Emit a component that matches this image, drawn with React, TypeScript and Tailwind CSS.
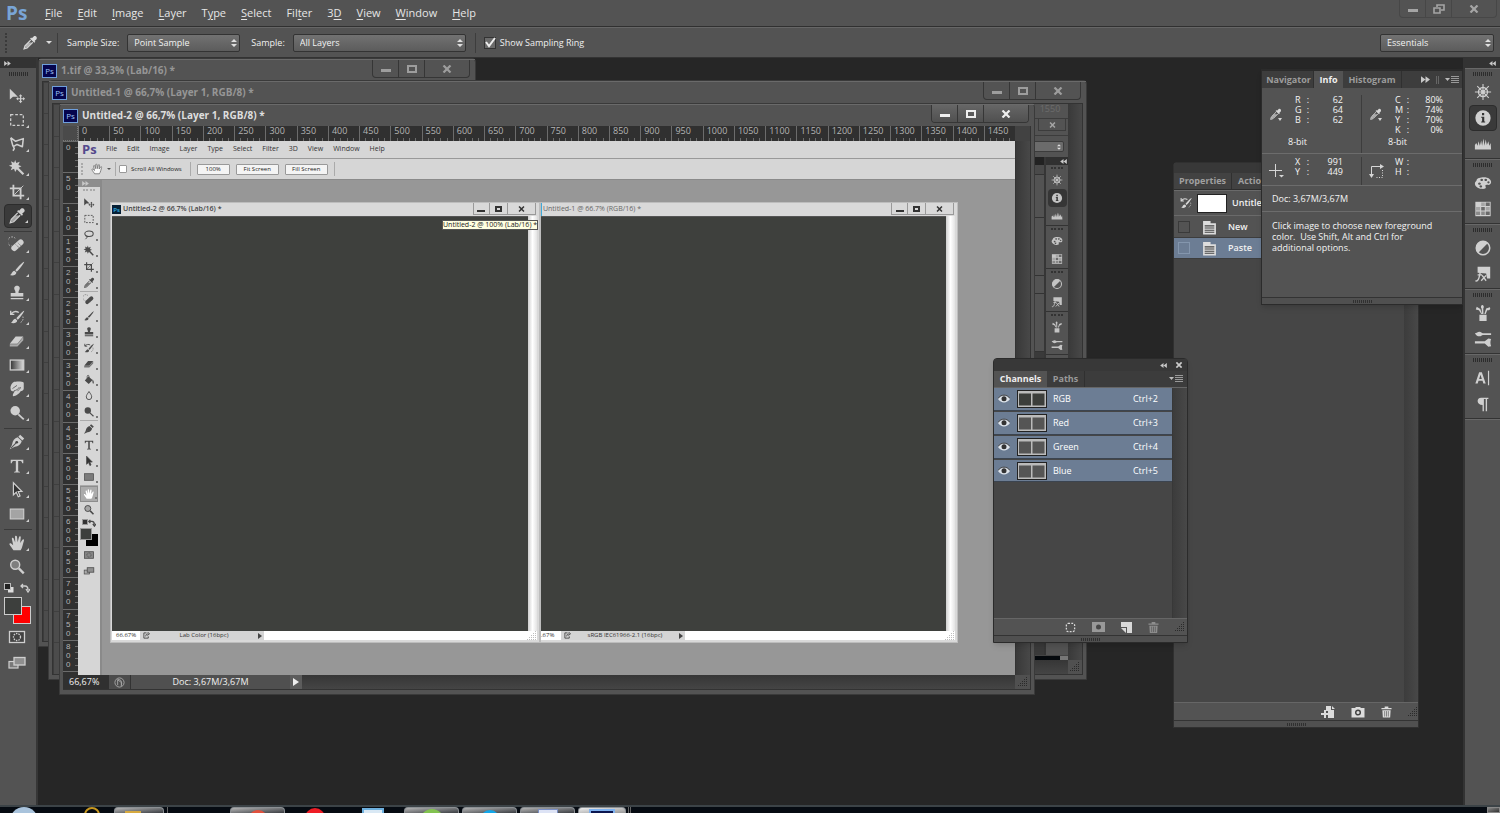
import type { ReactNode } from "react";
import clsx from "clsx";

const tools: Record<string, ReactNode> = {
  move: (
    <>
      <path d="M2 2v12l3.500-3.300H11z" />
      <path d="M14 8l2 2.400h-1.300v2h2V11L19 13l-2.300 2v-1.400h-2v2H16L14 18l-2-2.400h1.300v-2h-2V15L9 13l2.300-2v1.400h2v-2H12z" />
    </>
  ),
  marquee: <rect x="3" y="4" width="14" height="12" fill="none" stroke="currentColor" strokeWidth="1.400" strokeDasharray="3 2" />,
  polyLasso: (
    <path d="M3 3l5.500 4L17 4l-1 9-6-2.500-4 2.500 1 2-1.500 2.500M3 3l2.500 9.500" fill="none" stroke="currentColor" strokeWidth="1.700" strokeLinejoin="round" />
  ),
  lasso: (
    <>
      <ellipse cx="10" cy="8" rx="7" ry="4.500" fill="none" stroke="currentColor" strokeWidth="1.700" />
      <path d="M5 11c-1.500 1.500 2.500 1.500 1.500 3.500L4 17" fill="none" stroke="currentColor" strokeWidth="1.500" />
    </>
  ),
  wand: (
    <path d="M8 1l1.200 3.500L13 3l-1.500 3.600L15 8l-3.300 1.600 6.300 6.600-1.700 1.600-6.500-6.500L8 14.500l-1.300-3.700L3 12.500l1.500-3.600L1 7.500 4.600 6 3.200 2.500l3.600 1.800z" />
  ),
  crop: (
    <>
      <path d="M6 2v12h12M2 6h12v12" fill="none" stroke="currentColor" strokeWidth="2" />
      <path d="M7 13L17 3" stroke="currentColor" />
    </>
  ),
  eyedropper: (
    <>
      <path d="M12.300 4.200l2.300-2.400c2-1.700 5.100 1.200 3.500 3.400l-2.400 2.300 1 1-1.300 1.300-5.300-5.200 1.300-1.400z" />
      <path d="M10.800 6.500L3.700 13.600 2.500 17.500l3.900-1.200 7.100-7.100" fill="none" stroke="currentColor" strokeWidth="1.400" />
      <path d="M8 9.500h4.500l-6 6-3 .800.900-2.800z" opacity="0.700" />
    </>
  ),
  heal: (
    <>
      <path d="M8 2.500a5 5 0 1 0-4 8.500" fill="none" stroke="currentColor" strokeDasharray="1.500 1.500" />
      <rect x="2.500" y="7" width="16" height="6.500" rx="3.200" transform="rotate(-42 10.500 10.250)" />
      <path d="M8.500 9.500l4.500 4M11 7.500l4 4" stroke="#555" strokeWidth="0.900" strokeDasharray="1 1" />
    </>
  ),
  brush: (
    <path d="M18 2c.6.500-6.800 10.500-8.200 11l-1.700-1.600C9.500 9.500 17 1.500 18 2zM7.300 12l2 2c0 3-4.300 4-7.300 2.800C4.500 16 4 12.500 7.300 12z" />
  ),
  stamp: <path d="M10 2c3.200 0 3.600 2.800 2.500 4.600-.7 1.200-.9 2-.7 3.400H17v4H3v-4h5.200c.2-1.400 0-2.200-.7-3.400C6.400 4.800 6.800 2 10 2zM3 15.500h14V17H3z" />,
  historyBrush: (
    <>
      <path d="M3 3v4h4M3.500 6.500C6 3.500 9.500 3.500 12 5" fill="none" stroke="currentColor" strokeWidth="1.500" />
      <path d="M18 3c.6.500-5.800 9.500-7.200 10l-1.500-1.500C10.600 9.500 17 2.500 18 3zM8.300 12l1.900 2c0 3-4.200 3.700-7.200 2.500 2.500-.800 2-4 5.300-4.500z" />
      <path d="M16.500 9.500c1 3-.5 6-3.500 7" fill="none" stroke="currentColor" strokeDasharray="1.500 1.500" />
    </>
  ),
  eraser: (
    <>
      <path d="M8.500 5H17l-6.500 8H2z" />
      <path d="M2 13.500h8.500L17 5.500v3.700L10.500 16H2z" opacity="0.700" />
    </>
  ),
  gradient: (
    <>
      <defs>
        <linearGradient id="ramp">
          <stop offset="0" stopColor="#333" />
          <stop offset="1" stopColor="#ddd" />
        </linearGradient>
      </defs>
      <rect x="2.500" y="4.500" width="15" height="11" fill="url(#ramp)" stroke="currentColor" strokeWidth="1.400" />
    </>
  ),
  bucket: (
    <>
      <path d="M9 4l7 6-6.500 6.500L3 11z" />
      <path d="M7 8V4c0-2.500 3-2.500 3 0v4" fill="none" stroke="currentColor" strokeWidth="1.300" />
      <path d="M16 9c2 2 2.500 6 1.500 7s-2.500-3-1.500-7z" />
    </>
  ),
  smudge: (
    <>
      <path d="M6 2.500C9 1.500 16 1.500 17.500 3v6.500c0 2-2 3-3.500 3-1 2.500-5.500 5.500-8 5.500-1.500-.500 0-3.500 1.500-5.500-2.500.500-5-.500-4.500-2.500C2 8 4 3.500 6 2.500z" />
      <path d="M5 9.500l5-3.500M6.500 12c3-.5 5-2 6-4M10.500 12c2-1 3-2.500 3.500-4" fill="none" stroke="#555" strokeWidth="0.900" />
    </>
  ),
  blur: <path d="M10 2.500c2.500 4 4.500 6 4.500 9a4.500 4.500 0 0 1-9 0c0-3 2-5 4.500-9z" fill="none" stroke="currentColor" strokeWidth="1.500" />,
  dodge: (
    <>
      <circle cx="8" cy="7.500" r="5.300" />
      <path d="M11.500 11.500l6 5.500" stroke="currentColor" strokeWidth="2" />
    </>
  ),
  pen: (
    <>
      <path d="M13.500 2l4.500 4-2 2.200-4.500-4zM10.700 4.800l4.500 4.200c-.7 4-4 6-7.700 6.300L2 18c.5-1.700 2-3.300 2.600-5.500.6-3.500 2.600-6.900 6.100-7.700z" />
      <path d="M3 17l6-6" stroke="#555" strokeWidth="1.200" />
      <circle cx="9.700" cy="10.300" r="1.500" fill="#444" />
    </>
  ),
  type: <path d="M3 3h14v4h-1.200c-.3-1.800-1-2.500-2.600-2.500h-1.900v10.600c0 1 .5 1.300 2 1.400v.800H6.700v-.800c1.500-.100 2-.400 2-1.400V4.500H6.800C5.200 4.500 4.500 5.200 4.200 7H3z" />,
  pathSelect: <path d="M6 2v13.500l3.200-3 2.200 5 2-.900-2.100-4.900H15.500z" fill="#333" stroke="currentColor" strokeWidth="1.300" />,
  shape: <rect x="2.500" y="4.500" width="15" height="11" fill="currentColor" fillOpacity="0.650" stroke="currentColor" strokeWidth="1.200" />,
  hand: <path d="M6 18c-1-2-4.500-6-4.500-7s1.500-1 2.300-.3l2 1.800L4.300 5.500c-.3-1.500 1.500-1.800 2-.500L8 9.500 7.800 3c0-1.500 2-1.500 2.200 0l.7 6.200L12.200 3.500c.4-1.400 2.200-1 2 .5l-.7 6L16 6.500c.8-1.200 2.200-.4 1.700.9-1 2.800-1.700 8-3.700 10.600z" />,
  zoom: (
    <>
      <circle cx="8" cy="7.500" r="5" fill="currentColor" fillOpacity="0.350" stroke="currentColor" strokeWidth="1.600" />
      <path d="M12 11.500l5.500 5.500" stroke="currentColor" strokeWidth="2.600" />
    </>
  ),
  quickMask: (
    <>
      <rect x="2.500" y="4.500" width="15" height="11" fill="#333" fillOpacity="0.500" stroke="currentColor" strokeWidth="1.300" />
      <circle cx="10" cy="10" r="3.500" fill="none" stroke="currentColor" strokeWidth="1.300" strokeDasharray="1.500 1" />
    </>
  ),
  screenMode: (
    <>
      <rect x="2" y="8.500" width="9" height="6.500" fill="currentColor" fillOpacity="0.300" stroke="currentColor" strokeWidth="1.200" />
      <rect x="7" y="4.500" width="11" height="7.500" fill="#8f8f8f" stroke="currentColor" strokeWidth="1.300" />
    </>
  ),
  navigator: (
    <g fill="none" stroke="currentColor">
      <circle cx="10" cy="10" r="5" strokeWidth="1.500" />
      <circle cx="10" cy="10" r="1.500" strokeWidth="1.200" />
      <path d="M10 1v18M1 10h18M3.600 3.600l12.800 12.800M16.400 3.600L3.600 16.400" strokeWidth="1.200" />
    </g>
  ),
  info: (
    <>
      <circle cx="10" cy="10" r="8.500" />
      <path d="M8 8.500h3.400v5.300h1V15H8v-1.200h1V9.700H8zM8.900 4.500h2.400V7H8.900z" fill="#333" />
    </>
  ),
  histogram: <path d="M1 16v-5l1.500-2L4 12l1-5 1.500 5L8 6l1 6 1.500-8 1.200 8L13 5l1.300 6L16 7l1 5 1.500-3 .5 7z" />,
  color: (
    <path
      fillRule="evenodd"
      d="M11 3.500c5 0 8 2.500 8 5.500 0 2.500-2 3.500-4 3-2-.400-3 .600-2 2.200 1 2-2 2.600-4.500 2.300C4 16 1 13.500 1 10.500 1 8.500 3 8 3 6.500 3.500 4.500 7 3.500 11 3.500zM6 9.500a1.500 1.200 0 1 0 .1 0zM8.500 5.300a1.500 1.200 0 1 0 .1 0zM13 5.300a1.500 1.200 0 1 0 .1 0zM16 8a1.300 1.100 0 1 0 .1 0zM7.500 12.500a1.500 1.200 0 1 0 .1 0z"
    />
  ),
  swatches: (
    <>
      <rect x="1.500" y="2" width="17" height="16" />
      <path d="M8 2.800h4v4H8zM2.300 7.800h4.500v4H2.300zM13 7.800h4.500v4H13z" fill="#a5a5a5" />
      <path d="M13 2.800h4.500v4H13zM8 7.800h4v4H8zM13 12.800h4.500v4H13z" fill="#6a6a6a" />
      <path d="M2.300 12.800h4.500v4H2.300zM8 12.800h4v4H8z" fill="#8a8a8a" />
    </>
  ),
  adjustments: (
    <>
      <circle cx="10" cy="10" r="7.500" fill="none" stroke="currentColor" strokeWidth="1.700" />
      <path d="M15.500 4.500a7.700 7.700 0 0 0-11 11z" />
    </>
  ),
  styles: (
    <>
      <path d="M4 2h14v13h-3.500l-1-5.500L4 8.500z" />
      <path d="M9.500 7.500C7 6.500 6.700 9 6.200 11.500S4.500 19 1.500 17.500M4 11h5M9 11.500l4.500 6M13.500 11.500l-5.500 6" fill="none" stroke="currentColor" strokeWidth="1.500" />
    </>
  ),
  brushPanel: (
    <path d="M6 12h8v7H6zM9 11L8.500 5C7 3 8 1 9.500 1c2 1 1.500 3 .8 4L10.500 11zM8 11L5.500 7 2 6l1-3 4 2.500L9 11zM11.500 11l2-6 4-1.500c1.500 2-.5 4-2.800 3.500L13 11z" />
  ),
  brushPresets: (
    <>
      <path d="M1 3.500c2 0 3-1.500 5-1.500 2 0 2.500 1.500 4 1.500h9v2h-9c-1.500 0-2 1.500-4 1.500S2.500 6 1 3.500z" />
      <path d="M1 12.500h11l4-3 3 .500c-1 2.500-1 5 0 8l-3 .500-4-3.500H1z" />
    </>
  ),
  character: (
    <path d="M5.700 3.500h3L13 16h-2.600l-.9-3H5l-.9 3H1.500zM7.200 6.500L5.700 11h3zM15.500 2h1.300v16h-1.300z" fillRule="evenodd" />
  ),
  paragraph: <path d="M8 3h8v1.500h-1.500V18H13V4.500h-2V18H9.500v-7C2.500 11 2.500 3 8 3z" />,
};

const Icon = ({ name, className }: { name: string; className: string }) => (
  <svg viewBox="0 0 20 20" className={clsx("shrink-0", className)} fill="currentColor" aria-hidden="true">
    {tools[name]}
  </svg>
);

const toolGroups = [
  ["move", "marquee", "polyLasso", "wand", "crop", "eyedropper"],
  ["heal", "brush", "stamp", "historyBrush", "eraser", "gradient", "smudge", "dodge"],
  ["pen", "type", "pathSelect", "shape"],
  ["hand", "zoom"],
];

const innerToolGroups = [
  ["move", "marquee", "lasso", "wand", "crop", "eyedropper"],
  ["heal", "brush", "stamp", "historyBrush", "eraser", "bucket", "blur", "dodge"],
  ["pen", "type", "pathSelect", "shape"],
  ["hand", "zoom"],
];

const dockGroups = [
  ["navigator", "info", "histogram"],
  ["color", "swatches"],
  ["adjustments", "styles"],
  ["brushPanel", "brushPresets"],
  ["character", "paragraph"],
];

const menuItems = [
  ["", "F", "ile"],
  ["", "E", "dit"],
  ["", "I", "mage"],
  ["", "L", "ayer"],
  ["T", "y", "pe"],
  ["", "S", "elect"],
  ["Fil", "t", "er"],
  ["3", "D", ""],
  ["", "V", "iew"],
  ["", "W", "indow"],
  ["", "H", "elp"],
];

const channels = [
  { name: "RGB", keys: "Ctrl+2", shade: "#3c3e3b" },
  { name: "Red", keys: "Ctrl+3", shade: "#555" },
  { name: "Green", keys: "Ctrl+4", shade: "#555" },
  { name: "Blue", keys: "Ctrl+5", shade: "#555" },
];

const Grip = ({ className }: { className?: string }) => (
  <svg viewBox="0 0 19 4" preserveAspectRatio="none" className={clsx("h-1 w-[19px] shrink-0", className)} aria-hidden="true">
    <path d="M.5 0v4M2.500 0v4M4.500 0v4M6.500 0v4M8.500 0v4M10.500 0v4M12.500 0v4M14.500 0v4M16.500 0v4M18.500 0v4" stroke="#2c2c2c" />
  </svg>
);

const ResizeCorner = ({ className }: { className?: string }) => (
  <svg viewBox="0 0 10 10" className={clsx("size-[10px] shrink-0", className)} aria-hidden="true">
    <path d="M8.500 0v10M6.500 2v8M4.500 4v6M2.500 6v4M.5 8v2" stroke="#2a2a2a" strokeDasharray="1 1" />
  </svg>
);

const DoubleArrow = ({ flip, className }: { flip?: boolean; className?: string }) => (
  <svg viewBox="0 0 8 6" className={clsx("h-[5px] w-[7px] fill-[#c8c8c8]", flip && "rotate-180", className)} aria-hidden="true">
    <path d="M0 0l4 3-4 3zM4 0l4 3-4 3z" />
  </svg>
);

const PanelMenuIcon = () => (
  <svg viewBox="0 0 14 8" className="h-2 w-[14px]" aria-hidden="true">
    <path d="M0 2h5L2.500 5z" fill="#bbb" />
    <path d="M6 .5h8M6 2.500h8M6 4.500h8M6 6.500h8" stroke="#999" />
  </svg>
);

const CloseGlyph = ({ className }: { className: string }) => (
  <svg viewBox="0 0 10 8" className={className} fill="none" stroke="currentColor" strokeWidth="2.200" aria-hidden="true">
    <path d="M1.500.5l7 7M8.500.5l-7 7" />
  </svg>
);

const Trash = ({ className }: { className: string }) => (
  <svg viewBox="0 0 12 12" className={className} fill="currentColor" aria-hidden="true">
    <path d="M4 0h4v1.500h3.500V3H.5V1.500H4zM1.500 4h9L10 12H2z" />
    <path d="M4 5v6M6 5v6M8 5v6" stroke="#505050" strokeWidth="0.700" />
  </svg>
);

const PsBadge = () => (
  <span className="flex h-[14px] w-[15px] shrink-0 items-center justify-center border border-[#6f9fdc] bg-[#05054e] text-[8px] leading-none text-[#9cc4f5]">
    Ps
  </span>
);

const CaptionButtons = ({ tone }: { tone: "idle" | "active" }) => {
  const cell = clsx(
    "flex items-center justify-center border-[#363636]",
    tone === "active" ? "bg-linear-to-b from-[#666] to-[#505050] text-[#eee]" : "text-[#9d9d9d]"
  );
  return (
    <div className="flex h-[18px] self-start overflow-hidden rounded-b-sm border border-t-0 border-[#363636]">
      <button type="button" aria-label="Minimize" className={clsx(cell, "w-[26px] border-r")}>
        <span className="mt-1 h-[3px] w-[10px] bg-current" />
      </button>
      <button type="button" aria-label="Maximize" className={clsx(cell, "w-[26px] border-r")}>
        <span className="h-2 w-[10px] border-2 border-current" />
      </button>
      <button type="button" aria-label="Close" className={clsx(cell, "w-[44px]")}>
        <CloseGlyph className="h-2 w-[10px]" />
      </button>
    </div>
  );
};

const TitleBar = ({ title, tone }: { title: string; tone: "idle" | "active" }) => (
  <div className="flex h-[22px] shrink-0 items-center gap-1 border-t border-[#6a6a6a] pr-[5px] pl-[3px]">
    <PsBadge />
    <span className={clsx("flex-1 truncate text-[10px] font-bold", tone === "active" ? "text-[#dedede]" : "text-[#969696]")}>
      {title}
    </span>
    <CaptionButtons tone={tone} />
  </div>
);

const StepperArrows = () => (
  <svg viewBox="0 0 6 8" className="pointer-events-none absolute top-1/2 right-[3px] h-2 w-[6px] -translate-y-1/2 fill-[#e0e0e0]" aria-hidden="true">
    <path d="M0 3l3-3 3 3zM0 5l3 3 3-3z" />
  </svg>
);

const Dropdown = ({ id, value, className }: { id: string; value: string; className: string }) => (
  <span className={clsx("relative block", className)}>
    <select
      id={id}
      defaultValue={value}
      aria-label={value}
      className="block h-[18px] w-full appearance-none rounded-[2px] border border-[#333] bg-linear-to-b from-[#727272] to-[#5c5c5c] pl-[6px] text-[9px] leading-4 text-[#f2f2f2]"
    >
      <option>{value}</option>
    </select>
    <StepperArrows />
  </span>
);

const MenuBar = () => (
  <header className="flex h-[27px] shrink-0 items-center border-b border-[#303030] bg-[#535353]">
    <span className="w-[45px] pl-[6px] text-[19px] leading-none font-bold text-[#79a5d6]">Ps</span>
    <nav className="flex gap-[15px]">
      {menuItems.map(([before, key, after]) => (
        <button type="button" key={before + key + after} className="text-[11px] text-[#e6e6e6]">
          {before}
          <span className="underline underline-offset-2">{key}</span>
          {after}
        </button>
      ))}
    </nav>
    <div className="mr-[3px] ml-auto flex h-[18px] self-start rounded-b-sm border border-t-0 border-[#474747] text-[#a5a5a5]">
      <button type="button" aria-label="Minimize" className="flex w-[26px] items-center justify-center border-r border-[#474747]">
        <span className="mt-1 h-[3px] w-[10px] bg-current" />
      </button>
      <button type="button" aria-label="Restore" className="flex w-[26px] items-center justify-center border-r border-[#474747]">
        <svg viewBox="0 0 12 10" className="h-[10px] w-3" fill="none" stroke="currentColor" strokeWidth="1.600">
          <path d="M4 3V1h7v5H8M1 4h6v5H1z" />
        </svg>
      </button>
      <button type="button" aria-label="Close" className="flex w-[44px] items-center justify-center">
        <CloseGlyph className="h-2 w-[10px]" />
      </button>
    </div>
  </header>
);

const OptionsBar = () => (
  <div className="flex h-[31px] shrink-0 items-center border-t border-b border-t-[#666] border-b-[#333] bg-[#535353] text-[9px] text-[#f0f0f0]">
    <span className="ml-[5px] h-5 border-l-2 border-dotted border-[#3a3a3a]" />
    <button type="button" aria-label="Eyedropper tool" className="ml-[15px] flex items-center gap-2 text-[#dcdcdc]">
      <Icon name="eyedropper" className="size-4" />
      <span className="border-x-[3px] border-t-[3px] border-x-transparent border-t-current" />
    </button>
    <span className="mr-[9px] ml-[5px] h-5 border-l border-[#3d3d3d]" />
    <label htmlFor="sample-size">Sample Size:</label>
    <Dropdown id="sample-size" value="Point Sample" className="ml-2 w-[113px]" />
    <label htmlFor="sample" className="ml-[11px]">
      Sample:
    </label>
    <Dropdown id="sample" value="All Layers" className="ml-2 w-[173px]" />
    <span className="mr-2 ml-[9px] h-5 border-l border-[#3d3d3d]" />
    <label className="flex items-center gap-1">
      <span className="relative flex">
        <input type="checkbox" defaultChecked className="size-3 appearance-none border border-[#333] bg-[#6b6b6b]" />
        <svg viewBox="0 0 12 12" className="pointer-events-none absolute inset-0 size-3" fill="none" stroke="#eee" strokeWidth="2">
          <path d="M2 5l3 4 6-8" />
        </svg>
      </span>
      Show Sampling Ring
    </label>
    <Dropdown id="workspace" value="Essentials" className="mr-[6px] ml-auto w-[114px]" />
  </div>
);

const Toolbar = () => (
  <aside className="flex w-[38px] shrink-0 flex-col border-r-2 border-[#363636] bg-[#535353] text-[#cfcfcf]">
    <div className="flex h-[10px] shrink-0 items-center bg-[#333] pl-1">
      <DoubleArrow />
    </div>
    <Grip className="mx-auto mt-1 mb-[7px]" />
    {toolGroups.map((group) => (
      <div
        key={group[0]}
        className={clsx("mx-1 flex flex-col border-b pt-px pb-[3px]", group[0] === "hand" ? "border-transparent" : "border-[#3a3a3a]")}
      >
        {group.map((name) => (
          <button
            type="button"
            key={name}
            aria-label={name}
            className={clsx(
              "relative flex h-6 items-center justify-center rounded-sm pr-[2px]",
              name === "eyedropper" && "border border-[#2c2c2c] bg-[#3a3a3a]"
            )}
          >
            <Icon name={name} className="size-[18px]" />
            {name !== "move" && name !== "zoom" && (
              <span className="absolute right-[3px] bottom-1 border-b-[3px] border-l-[3px] border-b-current border-l-transparent" />
            )}
          </button>
        ))}
      </div>
    ))}
    <div className="flex items-center justify-between pr-[6px] pl-1">
      <svg viewBox="0 0 10 10" className="size-[10px]">
        <rect x="4" y="4" width="5.500" height="5.500" fill="#ddd" />
        <rect x=".5" y=".5" width="6" height="6" fill="#222" stroke="#bbb" />
      </svg>
      <svg viewBox="0 0 10 10" className="size-[10px]" fill="none" stroke="currentColor" strokeWidth="1.300">
        <path d="M1 3h4q3 0 3 4M3 1L1 3l2 2M6 6l2 3 2-3" />
      </svg>
    </div>
    <div className="mt-1 ml-1 grid h-[27px] w-[27px] grid-cols-3 grid-rows-3 self-start">
      <span className="z-10 col-start-1 col-end-3 row-start-1 row-end-3 border border-[#ccc] bg-[#3d3f3d]" />
      <span className="col-start-2 col-end-4 row-start-2 row-end-4 border border-[#ccc] bg-[#f00]" />
    </div>
    <div className="mx-auto mt-[2px] flex flex-col gap-1 pr-[2px]">
      <button type="button" aria-label="Quick mask" className="flex h-[22px] items-center">
        <Icon name="quickMask" className="size-5" />
      </button>
      <button type="button" aria-label="Screen mode" className="flex h-[22px] items-center">
        <Icon name="screenMode" className="size-5" />
      </button>
    </div>
  </aside>
);

const Dock = () => (
  <aside className="flex w-[37px] shrink-0 flex-col border-l-2 border-[#333] bg-[#535353] text-[#d0d0d0]">
    <div className="flex h-[10px] shrink-0 items-center justify-end bg-[#333] pr-1">
      <DoubleArrow flip />
    </div>
    {dockGroups.map((group) => (
      <div key={group[0]} className="flex flex-col items-center border-t border-b border-t-[#686868] border-b-[#333] pb-px">
        <Grip className="my-[3px]" />
        {group.map((name) => (
          <button
            type="button"
            key={name}
            aria-label={name}
            className={clsx(
              "flex h-[26px] w-7 items-center justify-center rounded-sm",
              name === "info" && "border border-[#2c2c2c] bg-[#3a3a3a]"
            )}
          >
            <Icon name={name} className="size-[18px]" />
          </button>
        ))}
      </div>
    ))}
    <div className="border-t border-[#686868]" />
  </aside>
);

const HorizontalRuler = () => (
  <div className="flex h-[15px] flex-1">
    {Array.from({ length: 30 }, (_, i) => (
      <div key={i} className="flex min-w-0 flex-1 basis-0 flex-col justify-between border-l border-[#6c6c6c]">
        <span className="pl-[3px] text-[9px] leading-[10px] text-[#b4b4b4]">{i * 50}</span>
        <span className="flex h-[3px] justify-evenly">
          {[0, 1, 2, 3].map((t) => (
            <span key={t} className="w-px bg-[#6c6c6c]" />
          ))}
        </span>
      </div>
    ))}
  </div>
);

const VerticalRuler = () => (
  <div className="flex w-[15px] shrink-0 flex-col bg-[#303030]">
    {Array.from({ length: 17 }, (_, i) => (
      <div key={i} className="flex min-h-0 flex-1 basis-0 justify-between border-t border-[#6c6c6c]">
        <span className="flex flex-col pt-px pl-[3px] font-['Liberation_Sans',sans-serif] text-[8px] leading-[9px] text-[#b4b4b4]">
          {String(i * 50)
            .split("")
            .map((digit, n) => (
              <span key={n}>{digit}</span>
            ))}
        </span>
        <span className="flex w-[3px] flex-col justify-evenly">
          {[0, 1, 2, 3].map((t) => (
            <span key={t} className="h-px bg-[#6c6c6c]" />
          ))}
        </span>
      </div>
    ))}
    <div className="h-1 border-t border-[#6c6c6c]" />
  </div>
);

const InnerToolbar = () => (
  <div className="flex w-[24px] shrink-0 flex-col border-r-2 border-[#8a8a8a] bg-[#d6d6d6] text-[#4a4a4a]">
    <div className="flex h-[7px] items-center bg-[#8e8e8e] pl-1">
      <DoubleArrow className="fill-[#555]" />
    </div>
    <span className="mx-auto mt-[2px] mb-1 w-3 border-t-2 border-dotted border-[#aaa]" />
    {innerToolGroups.map((group) => (
      <div key={group[0]} className={clsx("mx-[2px] flex flex-col border-b", group[0] === "hand" ? "border-transparent" : "border-[#aaa]")}>
        {group.map((name) => (
          <span
            key={name}
            className={clsx("relative flex h-4 items-center justify-center", name === "hand" && "border border-[#8d8d8d] bg-[#ababab] text-white")}
          >
            <Icon name={name} className="size-3" />
            {name !== "move" && name !== "zoom" && <span className="absolute right-0 bottom-[2px] size-[2px] bg-[#777]" />}
          </span>
        ))}
      </div>
    ))}
    <div className="flex justify-between px-1">
      <span className="size-[6px] border border-[#999] bg-[#333]" />
      <svg viewBox="0 0 10 10" className="size-2" fill="none" stroke="currentColor" strokeWidth="1.500">
        <path d="M1 3h4q3 0 3 4M3 1L1 3l2 2M6 6l2 3 2-3" />
      </svg>
    </div>
    <div className="mt-px ml-[2px] grid h-[18px] w-[18px] grid-cols-3 grid-rows-3">
      <span className="z-10 col-start-1 col-end-3 row-start-1 row-end-3 border border-[#999] bg-[#3d3f3d]" />
      <span className="col-start-2 col-end-4 row-start-2 row-end-4 bg-black" />
    </div>
    <span className="mt-[3px] flex flex-col items-center gap-1">
      <Icon name="quickMask" className="size-3" />
      <Icon name="screenMode" className="size-3" />
    </span>
  </div>
);

const InnerCaption = () => (
  <span className="flex h-3 self-start border border-t-0 border-[#999] text-[#333]">
    <span className="flex w-4 items-center justify-center border-r border-[#999]">
      <span className="mt-1 h-[2px] w-2 bg-current" />
    </span>
    <span className="flex w-[18px] items-center justify-center border-r border-[#999]">
      <span className="h-[6px] w-[7px] border-2 border-current" />
    </span>
    <span className="flex w-[27px] items-center justify-center">
      <CloseGlyph className="h-[6px] w-[7px]" />
    </span>
  </span>
);

interface InnerDocProps {
  title: string;
  zoom: string;
  profile: string;
  active?: boolean;
  className: string;
}

const InnerDoc = ({ title, zoom, profile, active, className }: InnerDocProps) => (
  <div className={clsx("flex min-w-0 basis-0 flex-col border border-[#bdbdbd] bg-[#d9d9d9]", className)}>
    <div className={clsx("flex h-[13px] items-center gap-[2px] pr-[3px] text-[7px]", active ? "pl-px font-semibold text-[#444]" : "border-l border-[#3fa9d8] pl-px text-[#666]")}>
      {active && (
        <span className="flex size-[9px] items-center justify-center bg-[#062036] text-[6px] leading-none text-[#35b5e8]">Ps</span>
      )}
      <span className="flex-1 truncate">{title}</span>
      <InnerCaption />
    </div>
    <div className={clsx("flex flex-1 pr-[2px]", active && "pl-px")}>
      <div className="flex-1 border-t border-[#555] bg-[#3e403d]" />
      <div className="w-[9px] bg-linear-to-r from-[#cfcfcf] via-white to-[#e3e3e3]" />
    </div>
    <div className={clsx("mr-[2px] mb-[2px] flex h-[9px] items-center bg-white text-[6px] leading-[9px] text-[#333]", active && "ml-px")}>
      <span className={clsx("shrink-0 overflow-hidden", active ? "w-7 pl-1" : "w-5")}>{zoom}</span>
      <span className="flex flex-none items-center bg-[#d4d4d4] pl-[3px]">
        <svg viewBox="0 0 8 8" className="size-[7px]" fill="none" stroke="#444">
          <path d="M4 1H1v6h5V5M3 5q0-3 3-3M5 0l2.500 2L5 4" />
        </svg>
        <span className="w-[108px] text-center">{profile}</span>
        <span className="mr-[2px] border-y-[3px] border-l-[4px] border-y-transparent border-l-[#444]" />
      </span>
      <ResizeCorner className="ml-auto size-2 opacity-30" />
    </div>
  </div>
);

const Artwork = () => (
  <div className="flex min-w-0 flex-1 flex-col bg-[#979797] text-[#555]">
    <div className="flex h-[18px] shrink-0 items-center border-b border-[#999] bg-[#d6d6d6]">
      <span className="w-7 pl-1 text-[13px] leading-none font-bold text-[#54498c]">Ps</span>
      <span className="flex gap-[10px] text-[7px] text-[#333]">
        {menuItems.map((parts) => (
          <span key={parts.join("")}>{parts.join("")}</span>
        ))}
      </span>
    </div>
    <div className="flex h-[21px] shrink-0 items-center border-b border-[#8a8a8a] bg-[#d6d6d6] text-[6px] text-[#222]">
      <span className="ml-[3px] h-3 border-l-2 border-dotted border-[#aaa]" />
      <svg viewBox="0 0 20 20" className="ml-2 size-3 fill-[#fafafa] stroke-[#777]" strokeWidth="1.500">
        {tools.hand}
      </svg>
      <span className="mx-1 border-x-2 border-t-2 border-x-transparent border-t-[#555]" />
      <span className="mr-[3px] h-[14px] border-l border-[#aaa]" />
      <label className="flex items-center gap-1">
        <input type="checkbox" className="size-2 appearance-none rounded-[1px] border border-[#999] bg-white" />
        Scroll All Windows
      </label>
      <span className="mr-[6px] ml-2 h-[14px] border-l border-[#aaa]" />
      <button type="button" className="mr-[6px] h-[11px] w-[33px] rounded-[1px] border border-[#999] bg-[#f4f4f4] leading-none">
        100%
      </button>
      <button type="button" className="mr-[6px] h-[11px] w-[43px] rounded-[1px] border border-[#999] bg-[#f4f4f4] leading-none">
        Fit Screen
      </button>
      <button type="button" className="h-[11px] w-[43px] rounded-[1px] border border-[#999] bg-[#f4f4f4] leading-none">
        Fill Screen
      </button>
      <span className="ml-[6px] h-[14px] border-l border-[#aaa]" />
    </div>
    <div className="flex min-h-0 flex-1">
      <InnerToolbar />
      <div className="relative flex flex-1 pt-[22px] pr-[57px] pb-8 pl-2">
        <InnerDoc title="Untitled-2 @ 66.7% (Lab/16) *" zoom="66.67%" profile="Lab Color (16bpc)" active className="grow-[430]" />
        <InnerDoc title="Untitled-1 @ 66.7% (RGB/16) *" zoom=".67%" profile="sRGB IEC61966-2.1 (16bpc)" className="grow-[418]" />
        <span className="absolute top-10 left-[340px] border border-[#555] bg-[#ffffe1] text-[7px] leading-2 whitespace-nowrap text-[#222]">
          Untitled-2 @ 100% (Lab/16) *
        </span>
      </div>
    </div>
  </div>
);

const FrontWindow = () => (
  <section className="absolute top-[45px] left-[21px] flex h-[592px] w-[976px] flex-col rounded-t-sm border border-[#3a3a3a] bg-[#535353]">
    <TitleBar title="Untitled-2 @ 66,7% (Layer 1, RGB/8) *" tone="active" />
    <div className="mx-[3px] mb-1 flex min-h-0 flex-1 flex-col border-r border-b border-[#333]">
      <div className="flex h-[15px] shrink-0 bg-[#303030]">
        <span className="w-[15px] border-r border-b border-dotted border-[#777] bg-[#4a4a4a]" />
        <HorizontalRuler />
        <span className="w-[15px] bg-[#424242]" />
      </div>
      <div className="flex min-h-0 flex-1">
        <VerticalRuler />
        <Artwork />
        <div className="w-[15px] shrink-0 border-l border-[#333] bg-linear-to-r from-[#393939] to-[#484848]" />
      </div>
      <div className="flex h-[14px] shrink-0 items-center bg-linear-to-b from-[#363636] to-[#454545] text-[9px] leading-[14px] text-[#f0f0f0]">
        <span className="w-[46px] bg-[#303030] pl-[6px]">66,67%</span>
        <span className="flex h-full w-[22px] items-center justify-center border-r border-[#333] bg-[#4b4b4b]">
          <svg viewBox="0 0 12 12" className="size-[11px]" fill="none" stroke="#a8a8a8">
            <circle cx="6" cy="6" r="5" />
            <path d="M4 9V3l4 3v4M4 3c4-1 5 3 4 6" />
          </svg>
        </span>
        <span className="h-full w-[159px] bg-[#505050] text-center">Doc: 3,67M/3,67M</span>
        <span className="flex h-full w-3 items-center justify-center bg-[#5c5c5c]">
          <span className="border-y-4 border-l-[6px] border-y-transparent border-l-[#eee]" />
        </span>
        <span className="ml-auto flex h-full w-[15px] items-center justify-center bg-[#505050]">
          <ResizeCorner />
        </span>
      </div>
    </div>
  </section>
);

const SliverDock = () => (
  <div className="flex w-6 flex-col border-l-2 border-[#363636] text-[#c4c4c4]">
    <div className="flex h-2 items-center justify-end bg-[#303030] pr-px">
      <DoubleArrow flip />
    </div>
    {dockGroups.slice(0, 4).map((group) => (
      <div key={group[0]} className="flex flex-col items-center border-b border-[#333]">
        <span className="my-[2px] w-3 border-t-2 border-dotted border-[#333]" />
        {group.map((name) => (
          <span key={name} className={clsx("flex h-[18px] w-[19px] items-center justify-center rounded-sm", name === "info" && "bg-[#363636]")}>
            <Icon name={name} className="size-3" />
          </span>
        ))}
      </div>
    ))}
  </div>
);

const SideTicks = ({ className }: { className: string }) => (
  <div className={clsx("flex shrink-0 flex-col border-l border-[#3c3c3c] bg-[#4c4c4c]", className)}>
    {Array.from({ length: 18 }, (_, i) => (
      <span key={i} className="flex-1 border-t border-[#3f3f3f]" />
    ))}
  </div>
);

const MiddleWindow = () => (
  <section className="absolute top-[22px] left-[10px] flex h-[600px] w-[1039px] flex-col rounded-t-sm border border-[#3a3a3a] bg-[#535353]">
    <TitleBar title="Untitled-1 @ 66,7% (Layer 1, RGB/8) *" tone="idle" />
    <div className="mx-[3px] mb-1 flex min-h-0 flex-1 border border-[#333]">
      <SideTicks className="w-[14px]" />
      <div className="flex-1 bg-[#262626]" />
      <div className="flex w-9 flex-col bg-[#535353]">
        <div className="flex h-[15px] flex-col items-center border-b border-[#3c3c3c] text-[9px] leading-[10px] text-[#6c6c6c]">1550</div>
        <div className="flex h-[17px] items-start justify-end border-b border-[#3c3c3c] pr-[2px]">
          <span className="flex h-3 w-7 items-center justify-center border border-t-0 border-[#3c3c3c] text-[#a5a5a5]">
            <CloseGlyph className="h-[6px] w-[7px]" />
          </span>
        </div>
        <div className="relative flex h-[21px] items-center pr-1">
          <span className="h-[11px] flex-1 rounded-[2px] border border-[#3c3c3c] bg-[#6b6b6b]" />
          <svg viewBox="0 0 6 8" className="absolute right-[7px] h-[6px] w-1 fill-[#e0e0e0]">
            <path d="M0 3l3-3 3 3zM0 5l3 3 3-3z" />
          </svg>
        </div>
        <div className="flex min-h-0 flex-1">
          <div className="flex flex-1 flex-col">
            <span className="h-2 bg-[#222]" />
            <span className="h-[10px] border-b border-[#333] bg-[#4a4a4a]" />
            <span className="h-[43px] border-b border-[#333]" />
            <span className="h-[58px] border-b border-[#333]" />
            <span className="h-[18px] border-b border-[#333]" />
            <span className="h-[58px] border-b border-[#333]" />
            <span className="flex-1 bg-[#3a3a3a]" />
          </div>
          <SliverDock />
        </div>
        <div className="flex h-[5px] justify-end border-t border-[#444] bg-[#05090d]">
          <span className="w-2 bg-[#777]" />
        </div>
        <div className="h-[14px] bg-linear-to-b from-[#363636] to-[#454545]" />
      </div>
      <div className="flex w-[14px] shrink-0 flex-col justify-end bg-linear-to-r from-[#393939] to-[#484848]">
        <span className="flex h-[14px] items-center justify-center bg-[#505050]">
          <ResizeCorner />
        </span>
      </div>
    </div>
  </section>
);

const BackWindow = () => (
  <section className="absolute top-0 left-0 flex h-[589px] w-[438px] flex-col rounded-t-sm border border-[#3a3a3a] bg-[#535353]">
    <TitleBar title="1.tif @ 33,3% (Lab/16) *" tone="idle" />
    <div className="mx-[3px] mb-1 flex min-h-0 flex-1 border border-[#333]">
      <SideTicks className="w-[14px]" />
      <div className="flex-1 bg-[#262626]" />
    </div>
  </section>
);

const PanelGrip = () => (
  <div className="flex h-[7px] shrink-0 items-center justify-center border-t border-[#333] bg-[#505050]">
    <Grip className="h-[3px]" />
  </div>
);

const ChannelsPanel = () => (
  <section className="absolute top-[300px] left-[955px] flex h-[285px] w-[195px] flex-col rounded-t-sm border border-[#2b2b2b] bg-[#535353] text-[9px] shadow-md">
    <div className="flex h-3 shrink-0 items-center justify-end gap-2 bg-[#383838] pr-1 text-[#ccc]">
      <DoubleArrow flip />
      <CloseGlyph className="h-[6px] w-2" />
    </div>
    <div className="flex h-[17px] shrink-0 items-center border-b border-[#666] bg-[#3c3c3c] pr-1 font-bold">
      <button type="button" className="h-full w-[53px] bg-[#535353] text-[#eee]">
        Channels
      </button>
      <button type="button" className="h-full w-[38px] border-r border-[#303030] text-[#999]">
        Paths
      </button>
      <span className="ml-auto">
        <PanelMenuIcon />
      </span>
    </div>
    <div className="flex min-h-0 flex-1">
      <ul className="flex-1 bg-[#464646] text-white">
        {channels.map(({ name, keys, shade }) => (
          <li key={name} className="flex h-[23px] items-center border-b border-[#3b4450] bg-[#6c7d94] pr-[14px] pl-1 not-last:mb-px last:h-[22px]">
            <svg viewBox="0 0 12 10" className="h-[10px] w-3" aria-hidden="true">
              <path d="M0 5c3-5 9-5 12 0-3 4.500-9 4.500-12 0z" fill="#dde3ea" />
              <circle cx="6" cy="4.800" r="2.500" fill="#333" />
              <path d="M0 4.500C3 0 9 0 12 4.500" fill="none" stroke="#444" />
            </svg>
            <svg viewBox="0 0 30 18" className="ml-[7px] h-[18px] w-[30px]" aria-hidden="true">
              <rect x=".5" y=".5" width="29" height="17" fill="#bbb" stroke="#222" />
              <path d="M2 3.500h12v12H2zM15.500 3.500h12v12h-12z" fill={shade} />
            </svg>
            <span className="ml-[6px]">{name}</span>
            <span className="ml-auto">{keys}</span>
          </li>
        ))}
      </ul>
      <div className="w-[15px] border-l border-[#383838] bg-linear-to-r from-[#3c3c3c] to-[#484848]" />
    </div>
    <div className="flex h-[17px] shrink-0 items-center justify-end gap-4 border-t border-[#666] pr-[2px] text-[#d8d8d8]">
      <button type="button" aria-label="Load selection">
        <svg viewBox="0 0 12 12" className="size-[11px]" fill="none" stroke="currentColor" strokeWidth="1.400" strokeDasharray="2 1.400">
          <rect x="1.500" y="1.500" width="9" height="9" rx="2" />
        </svg>
      </button>
      <button type="button" aria-label="Save selection" className="text-[#999]">
        <svg viewBox="0 0 13 10" className="h-[10px] w-[13px]">
          <path d="M0 0h13v10H0z" fill="currentColor" />
          <circle cx="6.500" cy="5" r="2.500" fill="#484848" />
        </svg>
      </button>
      <button type="button" aria-label="New channel">
        <svg viewBox="0 0 11 11" className="size-[11px]" fill="currentColor">
          <path d="M0 0h11v11H6V5H0zM0 6h5v5z" />
        </svg>
      </button>
      <button type="button" aria-label="Delete channel" className="text-[#8e8e8e]">
        <Trash className="size-[11px]" />
      </button>
      <ResizeCorner />
    </div>
    <PanelGrip />
  </section>
);

const HistoryRow = ({ name, selected }: { name: string; selected?: boolean }) => (
  <li className={clsx("flex h-[21px] items-center border-b border-[#3d3d3d] pl-1", selected && "bg-[#6c7d94]")}>
    <span className={clsx("size-3 border", selected ? "border-[#8496ad]" : "border-[#3a3a3a]")} />
    <svg viewBox="0 0 14 14" className="ml-3 size-[15px]" aria-hidden="true">
      <path d="M1 1h7v2h5v10.500H1z" fill="#ddd" />
      <path d="M2.500 5.500h9M2.500 7.500h9M2.500 9.500h9M2.500 11.500h9" stroke="#444" />
    </svg>
    <span className="ml-[11px] font-semibold">{name}</span>
  </li>
);

const HistoryPanel = () => (
  <section className="absolute top-[104px] left-[1135px] flex h-[566px] w-[246px] flex-col rounded-t-sm border border-[#303030] bg-[#535353] text-[9px] text-[#f0f0f0]">
    <div className="h-[10px] shrink-0 bg-[#383838]" />
    <div className="flex h-[17px] shrink-0 items-center border-b border-[#2e2e2e] bg-[#424242] font-bold text-[#a0a0a0]">
      <button type="button" className="h-full w-[58px] border-r border-[#303030]">
        Properties
      </button>
      <button type="button" className="h-full pl-[6px]">
        Actions
      </button>
    </div>
    <div className="flex h-[26px] shrink-0 items-center border-y border-y-[#6a6a6a] pl-[5px]">
      <Icon name="historyBrush" className="size-[14px] text-[#d8d8d8]" />
      <span className="ml-1 h-[19px] w-[30px] border border-[#222] bg-white" />
      <span className="ml-[5px] font-semibold">Untitled-2</span>
    </div>
    <ul className="shrink-0 pt-px">
      <HistoryRow name="New" />
      <HistoryRow name="Paste" selected />
    </ul>
    <div className="flex min-h-0 flex-1">
      <div className="flex-1 bg-[#464646]" />
      <div className="w-[14px] bg-linear-to-r from-[#3c3c3c] to-[#484848]" />
    </div>
    <div className="flex h-[18px] shrink-0 items-center justify-end gap-4 border-t border-[#666] text-[#dcdcdc]">
      <button type="button" aria-label="New document from state">
        <svg viewBox="0 0 14 12" className="h-3 w-[14px]" fill="currentColor">
          <path d="M5 0h5v4h3v8H7V5H5z" />
          <path d="M11 0l3 3h-3zM3 4h2v3h3v2H5v3H3V9H0V7h3z" />
        </svg>
      </button>
      <button type="button" aria-label="New snapshot">
        <svg viewBox="0 0 14 12" className="h-3 w-[14px]" fill="currentColor">
          <path d="M1 2h3l1-1h4l1 1h3.500v9.500H.5V2z" />
          <circle cx="7" cy="6.500" r="2.300" fill="none" stroke="#444" strokeWidth="1.500" />
        </svg>
      </button>
      <button type="button" aria-label="Delete state">
        <Trash className="h-3 w-[11px]" />
      </button>
      <ResizeCorner />
    </div>
    <PanelGrip />
  </section>
);

const Readout = ({ icon, rows, depth }: { icon: ReactNode; rows: string[][]; depth?: string }) => (
  <div className="relative flex w-1/2 gap-[10px] pl-[7px]">
    <span className="flex w-4 shrink-0 items-center text-[#d6d6d6]">{icon}</span>
    <dl className="text-[9px] leading-[10px]">
      {rows.map(([label, value]) => (
        <div key={label} className="flex">
          <dt className="flex w-[14px] justify-between">
            <span>{label}</span>
            <span>:</span>
          </dt>
          <dd className="w-[34px] text-right">{value}</dd>
        </div>
      ))}
    </dl>
    {depth && <span className="absolute bottom-[6px] left-[26px] text-[9px] leading-[10px]">{depth}</span>}
  </div>
);

const Dropper = () => (
  <span className="mb-5 flex items-end">
    <Icon name="eyedropper" className="size-[13px]" />
    <span className="-ml-1 border-x-2 border-t-[3px] border-x-transparent border-t-current" />
  </span>
);

const InfoPanel = () => (
  <section className="absolute top-[11px] right-0 flex h-[236px] w-[202px] flex-col border border-t-2 border-[#2b2b2b] bg-[#535353] text-[9px] text-[#f4f4f4] shadow-md">
    <div className="flex h-[17px] shrink-0 items-center bg-[#3d3d3d] pr-[3px] font-bold text-[#9c9c9c]">
      <button type="button" className="h-full w-[52px] border-r border-[#303030] pl-[2px]">
        Navigator
      </button>
      <button type="button" className="h-full w-[29px] bg-[#535353] text-[#f0f0f0]">
        Info
      </button>
      <button type="button" className="h-full w-[59px] border-r border-[#303030]">
        Histogram
      </button>
      <DoubleArrow className="ml-auto h-[7px] w-[9px]" />
      <span className="mx-[6px] h-2 w-[3px] border-x border-[#666]" />
      <PanelMenuIcon />
    </div>
    <div className="flex h-[66px] shrink-0 divide-x divide-[#3d3d3d] border-b border-[#6c6c6c] pt-[7px]">
      <Readout icon={<Dropper />} rows={[["R", "62"], ["G", "64"], ["B", "62"]]} depth="8-bit" />
      <Readout icon={<Dropper />} rows={[["C", "80%"], ["M", "74%"], ["Y", "70%"], ["K", "0%"]]} depth="8-bit" />
    </div>
    <div className="flex h-[32px] shrink-0 divide-x divide-[#3d3d3d] border-b border-[#6c6c6c] pt-[3px]">
      <Readout
        icon={
          <svg viewBox="0 0 16 14" className="h-[14px] w-4" fill="none" stroke="currentColor">
            <path d="M6.500 0v13M0 6.500h13" />
            <path d="M10 11h5l-2.500 2.500z" fill="currentColor" stroke="none" />
          </svg>
        }
        rows={[["X", "991"], ["Y", "449"]]}
      />
      <Readout
        icon={
          <svg viewBox="0 0 16 14" className="h-[14px] w-4" fill="none" stroke="currentColor">
            <path d="M2.500 12V2.500H12" />
            <path d="M11 0l4 2.500L11 5zM0 10h5l-2.500 4z" fill="currentColor" stroke="none" />
            <path d="M13.500 6v7.500H6" strokeDasharray="1 1.500" />
          </svg>
        }
        rows={[["W", ""], ["H", ""]]}
      />
    </div>
    <p className="flex h-[26px] shrink-0 items-center border-b border-[#6c6c6c] pl-[10px]">Doc: 3,67M/3,67M</p>
    <p className="flex-1 pt-2 pl-[10px] leading-[11px] whitespace-pre-line">
      {"Click image to choose new foreground\ncolor.\u00a0 Use Shift, Alt and Ctrl for\nadditional options."}
    </p>
    <PanelGrip />
  </section>
);

const taskButton = "h-full shrink-0 overflow-hidden rounded-t-sm border border-b-0 border-[#8b8f93] bg-linear-to-br from-[#b5b5b5] to-[#3c3f44] flex justify-center";

const Taskbar = () => (
  <footer className="flex h-2 shrink-0 overflow-hidden border-t-2 border-[#3c4347] bg-[#060b12]">
    <button type="button" aria-label="Start" className="ml-[10px] size-7 shrink-0 rounded-full bg-[#a9c3dc]" />
    <span className="ml-[46px] size-4 shrink-0 rounded-full border-2 border-[#c8981f]" />
    <button type="button" aria-label="Explorer" className={clsx(taskButton, "ml-[14px] w-[50px]")}>
      <span className="mt-[3px] mr-3 h-3 w-4 bg-[#d6a93f]" />
    </button>
    <span className="ml-[3px] h-full border-l border-[#666]" />
    <button type="button" aria-label="Chrome" className={clsx(taskButton, "ml-[62px] w-[55px]")}>
      <span className="mt-[2px] size-5 shrink-0 rounded-full bg-[#e1503d]" />
    </button>
    <span className="mt-px ml-5 size-5 shrink-0 rounded-full bg-[#ee1c25]" />
    <span className="mt-px ml-[37px] h-4 w-[22px] shrink-0 border-2 border-[#6eb1e0] bg-[#d9e8f4]" />
    <button type="button" aria-label="Torrent" className={clsx(taskButton, "ml-5 w-[55px]")}>
      <span className="mt-px size-6 shrink-0 rounded-full bg-[#82c250]" />
    </button>
    <button type="button" aria-label="Skype" className={clsx(taskButton, "ml-[3px] w-[55px]")}>
      <span className="mt-[2px] size-5 shrink-0 rounded-full bg-[#12a7ea]" />
    </button>
    <button type="button" aria-label="Documents" className={clsx(taskButton, "ml-[3px] w-[55px]")}>
      <span className="mt-px h-5 w-5 shrink-0 border border-[#7b8fc4] bg-[#dde3f5]" />
    </button>
    <button type="button" aria-label="Photoshop" className={clsx(taskButton, "ml-[3px] w-12 from-[#eee] to-[#999]")}>
      <span className="mt-px h-5 w-[26px] shrink-0 border-2 border-[#7eb2f0] bg-[#0c1650]" />
    </button>
    <span className="ml-[2px] w-[3px] border-x border-[#666]" />
    <button type="button" aria-label="Show desktop" className="ml-auto h-full w-[13px] border border-[#888] bg-linear-to-br from-[#888] to-[#333]" />
  </footer>
);

export default function App() {
  return (
    <div className="flex h-screen flex-col overflow-hidden bg-[#262626] font-['Open_Sans','Noto_Sans',sans-serif]">
      <MenuBar />
      <OptionsBar />
      <div className="flex min-h-0 flex-1">
        <Toolbar />
        <main className="relative min-w-0 flex-1 overflow-hidden bg-[#262626]">
          <BackWindow />
          <MiddleWindow />
          <FrontWindow />
          <HistoryPanel />
          <ChannelsPanel />
          <InfoPanel />
        </main>
        <Dock />
      </div>
      <Taskbar />
    </div>
  );
}
